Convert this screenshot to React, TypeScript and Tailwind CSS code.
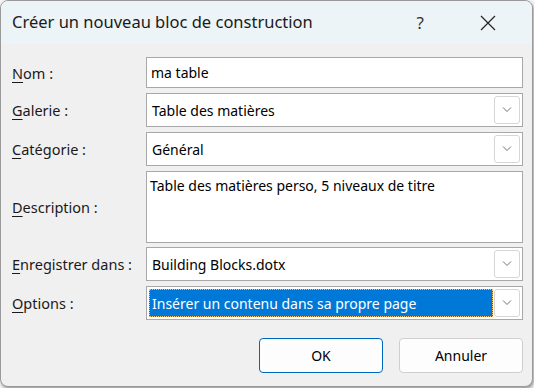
import React from "react";

const font = { fontFamily: '"Noto Sans", "Open Sans", sans-serif' };

function Chevron() {
  return (
    <div className="absolute right-[2px] top-[2px] bottom-[2px] w-[26px] rounded-[3px] border border-[#d6d6d6] bg-white flex items-center justify-center">
      <svg width="10" height="6" viewBox="0 0 10 6" fill="none">
        <path d="M1 0.5 L5 4.5 L9 0.5" stroke="#707070" strokeWidth="1" />
      </svg>
    </div>
  );
}

function Label({ k, rest }: { k: string; rest: string }) {
  return (
    <span className="text-[14.5px] text-[#1a1a1a]">
      <span className="underline underline-offset-[3px] decoration-1">{k}</span>
      {rest}
    </span>
  );
}

export default function App() {
  return (
    <div className="w-[534px] h-[388px] bg-[#f3f3f3] overflow-hidden" style={font}>
      <div className="w-[533px] h-[387px] rounded-[8px] border border-[#9a9a9a] bg-[#f0f0f0] overflow-hidden flex flex-col shadow-[1px_2px_3px_rgba(0,0,0,0.35)]">
        <div className="h-[43px] shrink-0 bg-[#edf4f7] flex items-center pl-[11px] pr-[36px] text-[16.5px] text-[#1a1a1a]">
          <span className="flex-1">Créer un nouveau bloc de construction</span>
          <span className="text-[17px] text-[#333] mr-[56px]">?</span>
          <svg width="16" height="16" viewBox="0 0 16 16" fill="none">
            <path d="M1 1 L15 15 M15 1 L1 15" stroke="#222" strokeWidth="1.2" />
          </svg>
        </div>

        <div className="flex flex-col gap-[5px] pt-[13px] pl-[11px] pr-[9px]">
          <div className="flex items-center h-[31px]">
            <div className="w-[134px]"><Label k="N" rest="om :" /></div>
            <div className="flex-1 h-full border border-[#a8a8a8] bg-white flex items-center pl-[4px] text-[14px] text-black">ma table</div>
          </div>
          <div className="flex items-center h-[34px]">
            <div className="w-[134px]"><Label k="G" rest="alerie :" /></div>
            <div className="relative flex-1 h-full border border-[#a8a8a8] bg-white flex items-center pl-[5px] text-[14px] text-black">
              Table des matières
              <Chevron />
            </div>
          </div>
          <div className="flex items-center h-[34px]">
            <div className="w-[134px]"><Label k="C" rest="atégorie :" /></div>
            <div className="relative flex-1 h-full border border-[#a8a8a8] bg-white flex items-center pl-[5px] text-[14px] text-black">
              Général
              <Chevron />
            </div>
          </div>
          <div className="flex items-center h-[72px]">
            <div className="w-[134px]"><Label k="D" rest="escription :" /></div>
            <div className="flex-1 h-full border border-[#a8a8a8] bg-white pl-[3px] pt-[4px] text-[14px] leading-[20px] text-black">
              Table des matières perso, 5 niveaux de titre
            </div>
          </div>
          <div className="flex items-center h-[34px] mt-[-1px]">
            <div className="w-[134px]"><Label k="E" rest="nregistrer dans :" /></div>
            <div className="relative flex-1 h-full border border-[#a8a8a8] bg-white flex items-center pl-[5px] text-[14px] text-black">
              Building Blocks.dotx
              <Chevron />
            </div>
          </div>
          <div className="flex items-center h-[34px]">
            <div className="w-[134px]"><Label k="O" rest="ptions :" /></div>
            <div className="relative flex-1 h-full border border-[#a8a8a8] bg-white p-[2px] pr-[29px]">
              <div className="h-full bg-[#0078d7] outline-1 outline-dotted outline-[#f0c070] -outline-offset-1 flex items-center pl-[3px] text-[14px] text-white">
                Insérer un contenu dans sa propre page
              </div>
              <Chevron />
            </div>
          </div>
        </div>

        <div className="flex justify-end gap-[16px] pr-[9px] mt-[18px] text-[14px] text-black">
          <button className="w-[124px] h-[35px] rounded-[4px] border border-[#0067c0] bg-[#fdfdfd]">OK</button>
          <button className="w-[124px] h-[35px] rounded-[4px] border border-[#cfcfcf] bg-[#fdfdfd]">Annuler</button>
        </div>
      </div>
    </div>
  );
}
